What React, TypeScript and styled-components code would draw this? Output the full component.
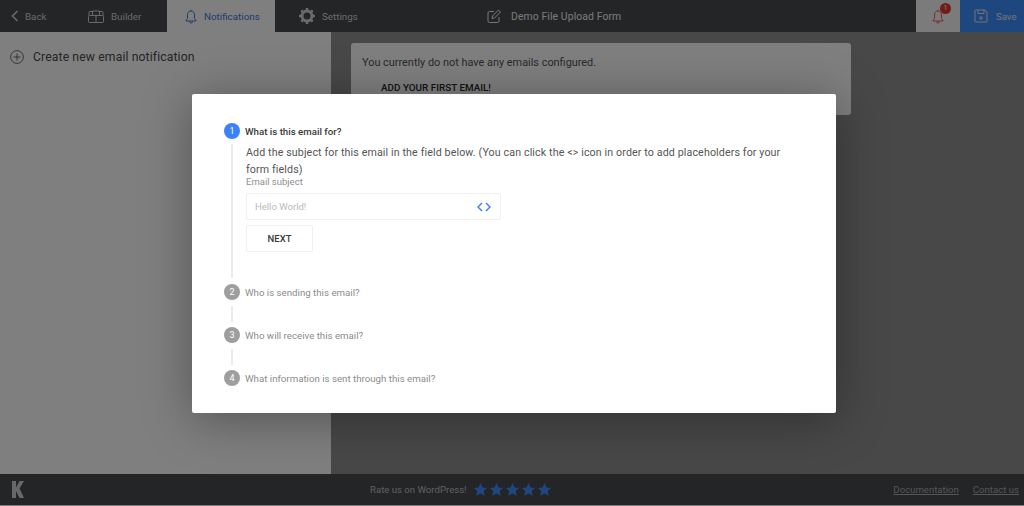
import React from "react";
import styled, { createGlobalStyle } from "styled-components";

const Global = createGlobalStyle`
  html, body { margin: 0; padding: 0; height: 100%; }
  body { font-family: Roboto, "Liberation Sans", sans-serif; background: #fff; overflow: hidden; }
  * { box-sizing: border-box; }
`;

const Page = styled.div`
  position: relative;
  width: 1024px;
  height: 506px;
  display: flex;
  flex-direction: column;
  background: #fff;
  overflow: hidden;
`;

const TopBar = styled.header`
  height: 32px;
  flex: none;
  display: flex;
  align-items: stretch;
  background: #484a4e;
  color: #d4d4d4;
  font-size: 9.8px;
`;

const NavItem = styled.div<{ $w: number; $active?: boolean; $pad: number; $gap?: number }>`
  width: ${(p) => p.$w}px;
  padding-left: ${(p) => p.$pad}px;
  display: flex;
  align-items: center;
  gap: ${(p) => p.$gap ?? 7}px;
  flex: none;
  background: ${(p) => (p.$active ? "#fff" : "transparent")};
  color: ${(p) => (p.$active ? "#3f78d8" : "inherit")};
  svg { flex: none; }
`;

const TitleBlock = styled.div`
  flex: 1;
  display: flex;
  align-items: center;
  gap: 10px;
  font-size: 10.4px;
  letter-spacing: 0.01em;
  color: #f2f2f2;
`;

const BellButton = styled.div`
  position: relative;
  width: 44px;
  flex: none;
  display: flex;
  align-items: center;
  justify-content: center;
  background: #f6f6f6;
  color: #ef5a5a;
`;

const Badge = styled.span`
  position: absolute;
  left: 24px;
  top: 3px;
  width: 11px;
  height: 11px;
  border-radius: 50%;
  background: #e53935;
  color: #fff;
  font-size: 7px;
  line-height: 11px;
  text-align: center;
`;

const SaveButton = styled.div`
  width: 64px;
  flex: none;
  display: flex;
  align-items: center;
  gap: 8px;
  padding-left: 14px;
  background: #3e8fff;
  color: #e8e8e8;
  font-size: 9.6px;
`;

const Body = styled.main`
  flex: 1;
  display: flex;
  min-height: 0;
`;

const Sidebar = styled.aside`
  width: 331px;
  flex: none;
  background: #fff;
`;

const CreateRow = styled.div`
  height: 49px;
  display: flex;
  align-items: center;
  gap: 9px;
  padding-left: 10px;
  color: #4a4a4a;
  font-size: 12.2px;
  letter-spacing: 0.01em;
`;

const MainArea = styled.section`
  flex: 1;
  background: #909090;
  padding: 11px 20px;
`;

const EmptyCard = styled.div`
  width: 500px;
  height: 72px;
  background: #fff;
  border-radius: 3px;
  padding: 13px 11px;
  color: #555;
  font-size: 10.9px;
`;

const AddFirst = styled.div`
  margin: 13px 0 0 19px;
  font-size: 9.9px;
  font-weight: 500;
  color: #2a2a2a;
`;

const Footer = styled.footer`
  height: 31px;
  flex: none;
  margin-bottom: 1px;
  display: grid;
  grid-template-columns: 358px 1fr auto;
  align-items: center;
  padding: 0 5px 0 12px;
  background: #484a4e;
  color: #c0c0c0;
  font-size: 9.6px;
`;

const Logo = styled.span`
  display: flex;
  color: #d0d0d0;
`;

const Rate = styled.div`
  display: flex;
  align-items: center;
  gap: 6px;
`;

const Stars = styled.div`
  display: flex;
  gap: 1px;
  color: #3e8fff;
`;

const FooterLinks = styled.div`
  display: flex;
  gap: 14px;
`;

const FooterLink = styled.span`
  text-decoration: underline;
  color: #aaa;
`;

const Overlay = styled.div`
  position: absolute;
  inset: 0;
  background: rgba(0, 0, 0, 0.5);
  display: flex;
  align-items: flex-start;
  padding: 94px 0 0 191.5px;
`;

const Modal = styled.div`
  width: 644.5px;
  height: 319px;
  padding: 29px 32.5px;
  background: #fff;
  border-radius: 2px;
  box-shadow: 0 6px 50px rgba(0, 0, 0, 0.35);
`;

const StepHead = styled.div`
  display: flex;
  align-items: center;
  gap: 5px;
  height: 16px;
`;

const Dot = styled.span<{ $active?: boolean }>`
  width: 16px;
  height: 16px;
  flex: none;
  border-radius: 50%;
  background: ${(p) => (p.$active ? "#3b82f6" : "#9e9e9e")};
  color: #fff;
  font-size: 9px;
  line-height: 16px;
  text-align: center;
`;

const StepLabel = styled.span<{ $active?: boolean }>`
  font-size: 9.7px;
  font-weight: ${(p) => (p.$active ? 500 : 400)};
  color: ${(p) => (p.$active ? "#3a3a3a" : "#8c8c8c")};
`;

const StepBody = styled.div`
  margin: 5px 0 6px 7px;
  height: 134px;
  border-left: 2px solid #ebebeb;
  padding-left: 13px;
`;

const Connector = styled.div`
  margin: 6px 0 5px 7px;
  height: 16px;
  border-left: 2px solid #ebebeb;
`;

const Intro = styled.p`
  margin: 0;
  font-size: 10.65px;
  line-height: 17px;
  color: #555;
  letter-spacing: 0.012em;
  width: 545px;
`;

const FieldLabel = styled.label`
  display: block;
  margin-top: -2px;
  font-size: 9.5px;
  line-height: 12px;
  color: #8f8f8f;
`;

const InputBox = styled.div`
  margin-top: 5px;
  width: 255px;
  height: 27px;
  display: flex;
  align-items: center;
  justify-content: space-between;
  padding: 0 9px 0 8px;
  border: 1px solid #f0f0f0;
  border-radius: 2px;
  color: #b9b9b9;
  font-size: 9.5px;
`;

const CodeIcon = styled.span`
  display: flex;
  color: #3b82f6;
`;

const NextButton = styled.button`
  display: block;
  margin-top: 5px;
  width: 67px;
  height: 27px;
  border: 1px solid #f0f0f0;
  border-radius: 2px;
  background: #fff;
  color: #3a3a3a;
  font-family: inherit;
  font-size: 9.5px;
  font-weight: 500;
`;

const Star = () => (
  <svg width="15" height="15" viewBox="0 0 24 24" fill="currentColor">
    <path d="M12 1.5l3.2 7.1 7.6.8-5.7 5.1 1.6 7.6L12 18.3l-6.7 3.8 1.6-7.6L1.2 9.4l7.6-.8z" />
  </svg>
);

const Chevron = () => (
  <svg width="8" height="12" viewBox="0 0 8 12" fill="none" stroke="currentColor" strokeWidth="1.6">
    <path d="M6.5 1L1.5 6l5 5" />
  </svg>
);

const BuilderIcon = () => (
  <svg width="16" height="13" viewBox="0 0 16 13" fill="none" stroke="currentColor" strokeWidth="1">
    <path d="M1 5.5V2.5a1 1 0 0 1 1-1h2.5v4M4.5 2.5V1h7v1.500M11.500 5.500v-4H14a1 1 0 0 1 1 1v3" />
    <rect x="0.500" y="5.500" width="15" height="7" rx="1" />
    <path d="M8 5.500v7" />
  </svg>
);

const BellIcon = ({ size = 14 }: { size?: number }) => (
  <svg width={size} height={size + 1} viewBox="0 0 14 15" fill="none" stroke="currentColor" strokeWidth="1">
    <path d="M7 2c-2.400 0-3.500 1.800-3.500 4v3.500L2 11.500v.5h10v-.5L10.500 9.500V6C10.500 3.800 9.400 2 7 2z" />
    <path d="M7 .8V2M5.500 12.500a1.500 1.500 0 0 0 3 0" />
  </svg>
);

const GearIcon = () => (
  <svg width="16" height="16" viewBox="0 0 16 16">
    <circle cx="8" cy="8" r="5" fill="none" stroke="currentColor" strokeWidth="3" />
    <g stroke="currentColor" strokeWidth="2.600">
      <path d="M8 0v2.500M8 13.500V16M0 8h2.500M13.500 8H16M2.300 2.300l1.800 1.800M11.900 11.900l1.800 1.800M13.700 2.300l-1.800 1.800M4.100 11.900l-1.800 1.800" />
    </g>
  </svg>
);

const EditIcon = () => (
  <svg width="14" height="14" viewBox="0 0 14 14" fill="none" stroke="currentColor" strokeWidth="1">
    <path d="M12 8v4a1.500 1.500 0 0 1-1.500 1.500h-8A1.500 1.500 0 0 1 1 12V4a1.500 1.500 0 0 1 1.500-1.500H7" />
    <path d="M5 9.500l.5-2.500L11.500 1l2 2-6 6z" />
  </svg>
);

const SaveIcon = () => (
  <svg width="14" height="14" viewBox="0 0 14 14" fill="none" stroke="currentColor" strokeWidth="1">
    <path d="M1.500 1h9.500l2 2v9.500a.5.500 0 0 1-.5.500h-11a.5.500 0 0 1-.5-.5v-11a.5.500 0 0 1 .5-.5z" />
    <path d="M4 1v3.500h6V1" />
    <circle cx="7" cy="9" r="1.300" />
  </svg>
);

const PlusCircle = () => (
  <svg width="14" height="14" viewBox="0 0 14 14" fill="none" stroke="currentColor" strokeWidth="0.8">
    <circle cx="7" cy="7" r="6.400" />
    <path d="M7 3.500v7M3.500 7h7" />
  </svg>
);

const Code = () => (
  <svg width="14" height="10" viewBox="0 0 14 10" fill="none" stroke="currentColor" strokeWidth="1.500">
    <path d="M5 1L1 5l4 4M9 1l4 4-4 4" />
  </svg>
);

const LogoMark = () => (
  <svg width="12" height="17" viewBox="0 0 12 17" fill="currentColor">
    <path d="M0 0h4v6.500L7.500 0H12L7.500 7.500 12 17H7.500L4 10v7H0z" />
  </svg>
);

export default function App() {
  return (
    <Page>
      <Global />
      <TopBar>
        <NavItem $w={88} $pad={11} $gap={6}>
          <Chevron /> Back
        </NavItem>
        <NavItem $w={79} $pad={0}>
          <BuilderIcon /> Builder
        </NavItem>
        <NavItem $w={108} $pad={17} $gap={6} $active>
          <BellIcon /> Notifications
        </NavItem>
        <NavItem $w={212} $pad={24}>
          <GearIcon /> Settings
        </NavItem>
        <TitleBlock>
          <EditIcon /> Demo File Upload Form
        </TitleBlock>
        <BellButton>
          <BellIcon size={14} />
          <Badge>1</Badge>
        </BellButton>
        <SaveButton>
          <SaveIcon /> Save
        </SaveButton>
      </TopBar>
      <Body>
        <Sidebar>
          <CreateRow>
            <PlusCircle /> Create new email notification
          </CreateRow>
        </Sidebar>
        <MainArea>
          <EmptyCard>
            You currently do not have any emails configured.
            <AddFirst>ADD YOUR FIRST EMAIL!</AddFirst>
          </EmptyCard>
        </MainArea>
      </Body>
      <Footer>
        <Logo>
          <LogoMark />
        </Logo>
        <Rate>
          Rate us on WordPress!
          <Stars>
            <Star />
            <Star />
            <Star />
            <Star />
            <Star />
          </Stars>
        </Rate>
        <FooterLinks>
          <FooterLink>Documentation</FooterLink>
          <FooterLink>Contact us</FooterLink>
        </FooterLinks>
      </Footer>
      <Overlay>
        <Modal>
          <StepHead>
            <Dot $active>1</Dot>
            <StepLabel $active>What is this email for?</StepLabel>
          </StepHead>
          <StepBody>
            <Intro>
              Add the subject for this email in the field below. (You can click the &lt;&gt; icon in order to add
              placeholders for your form fields)
            </Intro>
            <FieldLabel>Email subject</FieldLabel>
            <InputBox>
              Hello World!
              <CodeIcon>
                <Code />
              </CodeIcon>
            </InputBox>
            <NextButton>NEXT</NextButton>
          </StepBody>
          <StepHead>
            <Dot>2</Dot>
            <StepLabel>Who is sending this email?</StepLabel>
          </StepHead>
          <Connector />
          <StepHead>
            <Dot>3</Dot>
            <StepLabel>Who will receive this email?</StepLabel>
          </StepHead>
          <Connector />
          <StepHead>
            <Dot>4</Dot>
            <StepLabel>What information is sent through this email?</StepLabel>
          </StepHead>
        </Modal>
      </Overlay>
    </Page>
  );
}
